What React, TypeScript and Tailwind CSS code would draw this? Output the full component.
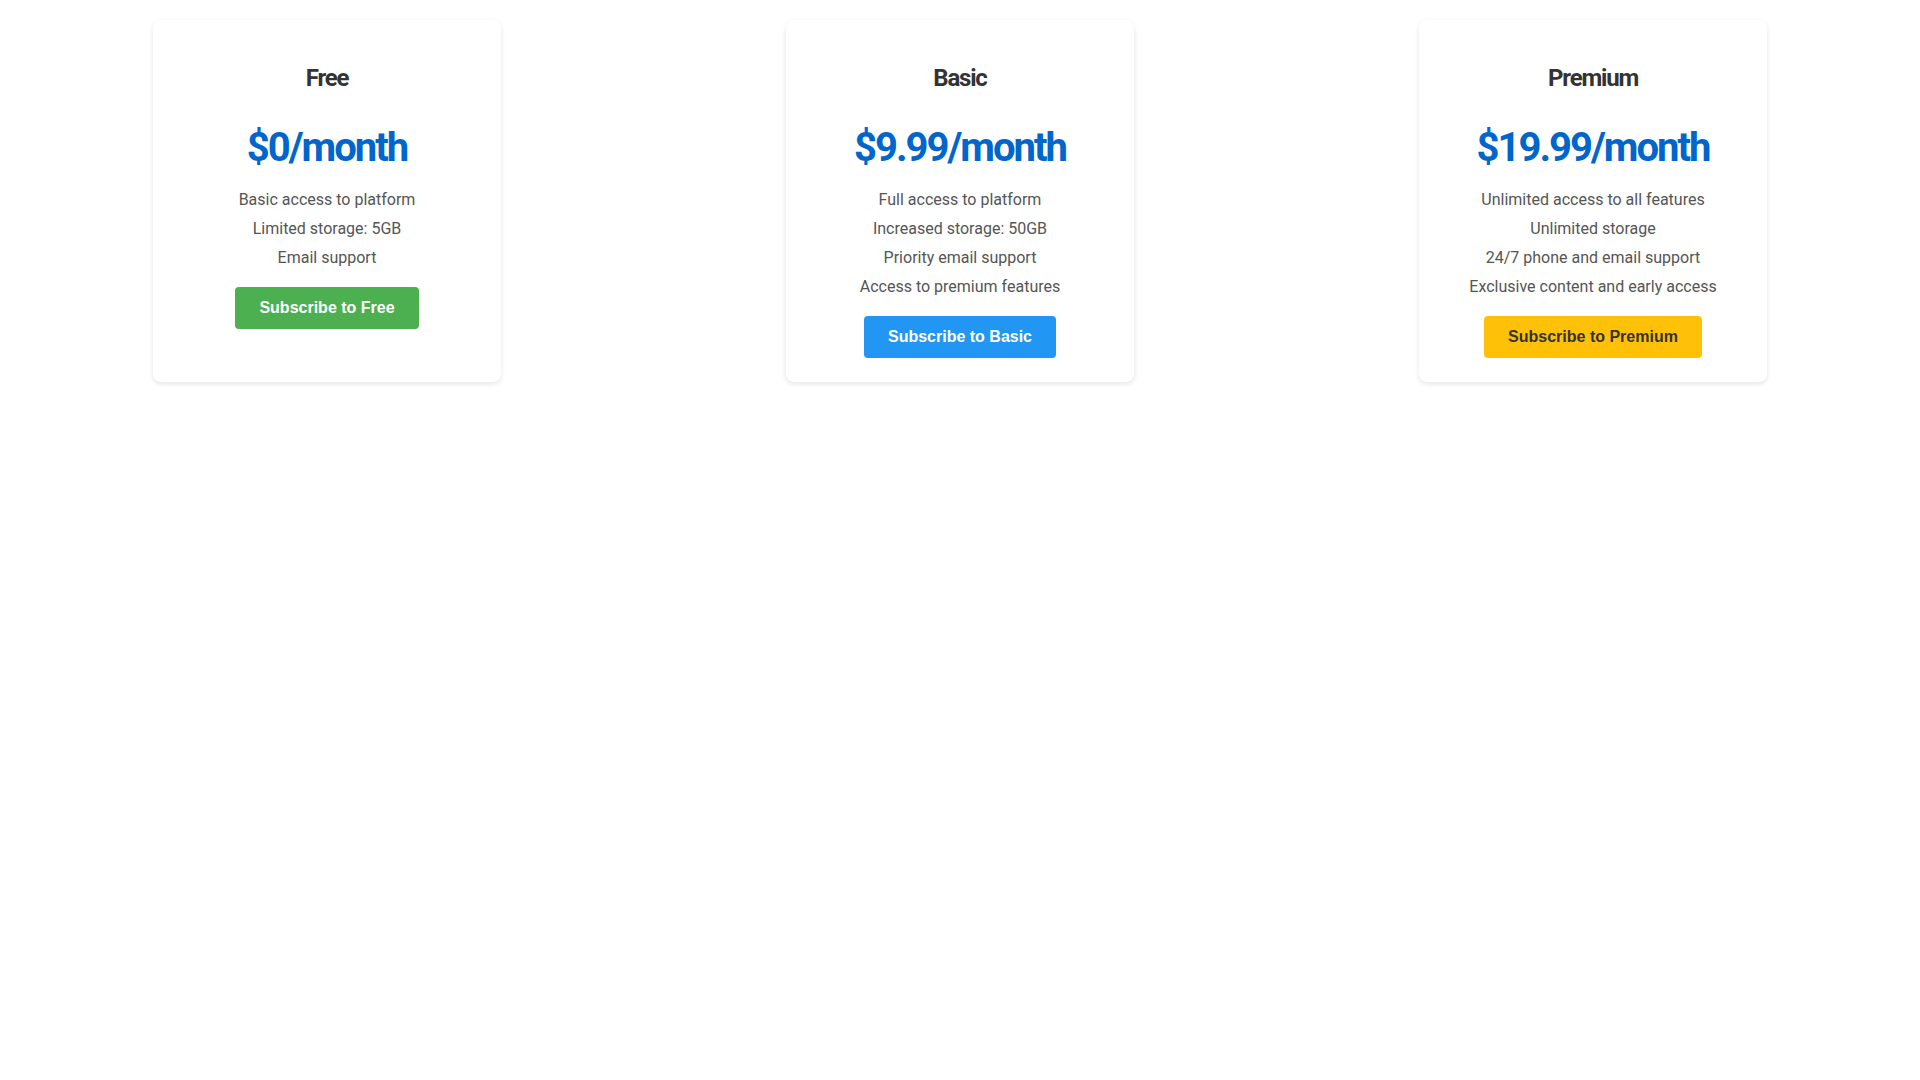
import React from "react";

type Plan = {
  name: string;
  price: string;
  features: string[];
  button: string;
  btnClass: string;
};

const plans: Plan[] = [
  {
    name: "Free",
    price: "$0/month",
    features: ["Basic access to platform", "Limited storage: 5GB", "Email support"],
    button: "Subscribe to Free",
    btnClass: "bg-[#4caf50] text-white",
  },
  {
    name: "Basic",
    price: "$9.99/month",
    features: [
      "Full access to platform",
      "Increased storage: 50GB",
      "Priority email support",
      "Access to premium features",
    ],
    button: "Subscribe to Basic",
    btnClass: "bg-[#2196f3] text-white",
  },
  {
    name: "Premium",
    price: "$19.99/month",
    features: [
      "Unlimited access to all features",
      "Unlimited storage",
      "24/7 phone and email support",
      "Exclusive content and early access",
    ],
    button: "Subscribe to Premium",
    btnClass: "bg-[#ffc107] text-[#333333]",
  },
];

export default function App() {
  return (
    <div className="min-h-[1080px] w-full bg-white font-['Roboto',sans-serif]">
      <div className="flex justify-between items-stretch px-[153px] pt-[20px]">
        {plans.map((p) => (
          <div
            key={p.name}
            className="w-[348px] rounded-[8px] bg-white p-[24px] text-center shadow-[0_2px_5px_rgba(0,0,0,0.1)]"
          >
            <h2 className="mt-[20px] text-[24px] leading-[28px] font-bold tracking-[-0.05em] text-[#333333]">{p.name}</h2>
            <div className="mt-[32px] text-[40px] leading-[48px] font-bold tracking-[-0.05em] text-[#0066cc]">{p.price}</div>
            <ul className="mt-[18px] flex flex-col gap-[10px]">
              {p.features.map((f) => (
                <li key={f} className="text-[16px] leading-[19px] text-[#555555]">
                  {f}
                </li>
              ))}
            </ul>
            <button
              className={`mt-[20px] rounded-[4px] px-[24px] py-[12px] text-[16px] leading-[18px] font-bold font-['Liberation_Sans',Arial,sans-serif] ${p.btnClass}`}
            >
              {p.button}
            </button>
          </div>
        ))}
      </div>
    </div>
  );
}
